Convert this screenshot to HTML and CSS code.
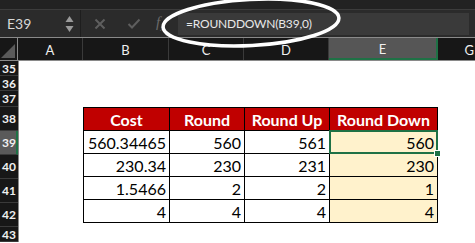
FILE: index.html
```html
<!DOCTYPE html>
<html lang="en">
<head>
    <meta charset="UTF-8">
    <title>ROUNDDOWN</title>
    <link rel="stylesheet" href="styles.css">
</head>
<body>
    <div class="app">
        <div class="topstrip"></div>

        <!-- Formula bar -->
        <div class="formula-bar">
            <div class="namebox">
                <span class="cell-ref">E39</span>
                <span class="spin">
                    <svg width="9" height="18" viewBox="0 0 9 18">
                        <path d="M4.5 1 L8.5 7 L0.5 7 Z" fill="#9a9a9a"/>
                        <path d="M4.5 17 L8.5 11 L0.5 11 Z" fill="#9a9a9a"/>
                    </svg>
                </span>
            </div>
            <span class="fb-btn">
                <svg width="12" height="12" viewBox="0 0 12 12">
                    <path d="M1.5 1.5 L10.5 10.5 M10.5 1.5 L1.5 10.5" stroke="#5e5e5e" stroke-width="2" fill="none"/>
                </svg>
            </span>
            <span class="fb-btn">
                <svg width="14" height="12" viewBox="0 0 14 12">
                    <path d="M1.5 6 L5 9.5 L12.5 1.5" stroke="#5e5e5e" stroke-width="2" fill="none"/>
                </svg>
            </span>
            <span class="fx">f<sub>x</sub></span>
            <div class="formula-input">=ROUNDDOWN(B39,0)</div>
            <!-- white annotation ellipse round the formula -->
            <svg class="callout" width="215" height="50" viewBox="0 0 215 50">
                <ellipse cx="111" cy="22.5" rx="88" ry="23" transform="rotate(-3 111 22.5)" fill="none" stroke="#fff" stroke-width="3.5"/>
            </svg>
        </div>

        <!-- Column headers -->
        <div class="col-headers">
            <div class="corner"><span class="corner-tri"></span></div>
            <div class="col-h">A</div>
            <div class="col-h">B</div>
            <div class="col-h">C</div>
            <div class="col-h">D</div>
            <div class="col-h active">E</div>
            <div class="col-h last">G</div>
        </div>

        <div class="sheet">
            <div class="row-headers">
                <div class="row-h short">35</div>
                <div class="row-h short">36</div>
                <div class="row-h short3">37</div>
                <div class="row-h">38</div>
                <div class="row-h active">39</div>
                <div class="row-h">40</div>
                <div class="row-h">41</div>
                <div class="row-h">42</div>
                <div class="row-h short">43</div>
            </div>
            <div class="cells">
                <table class="data">
                    <thead>
                        <tr>
                            <th class="w-cost">Cost</th>
                            <th class="w-round">Round</th>
                            <th class="w-up">Round Up</th>
                            <th class="w-down">Round Down</th>
                        </tr>
                    </thead>
                    <tbody>
                        <tr><td>560.34465</td><td>560</td><td>561</td><td class="down selected">560<span class="handle"></span></td></tr>
                        <tr><td>230.34</td><td>230</td><td>231</td><td class="down">230</td></tr>
                        <tr><td>1.5466</td><td>2</td><td>2</td><td class="down">1</td></tr>
                        <tr><td>4</td><td>4</td><td>4</td><td class="down">4</td></tr>
                    </tbody>
                </table>
            </div>
        </div>
    </div>
</body>
</html>
```

FILE: styles.css
```css
body {
    margin: 0;
    font-family: Lato, "Open Sans", Arial, sans-serif;
    background: #fff;
    overflow: hidden;
}

.app {
    width: 475px;
    height: 243px;
    overflow: hidden;
}

.topstrip {
    height: 9px;
    background: #222;
    border-bottom: 1px solid #3c3c3c;
}

/* Formula bar */
.formula-bar {
    position: relative;
    height: 27px;
    background: #2b2b2b;
    display: flex;
    align-items: center;
}

.namebox {
    width: 81px;
    height: 100%;
    border-right: 1px solid #1e1e1e;
    display: flex;
    align-items: center;
    justify-content: space-between;
    padding: 0 6px 0 7px;
    box-sizing: border-box;
}

.cell-ref {
    color: #d8d8d8;
    font-size: 14px;
}

.spin {
    display: flex;
}

.fb-btn {
    width: 31px;
    display: flex;
    justify-content: center;
    margin-left: 3px;
}

.fx {
    color: #6a6a6a;
    font-family: "Liberation Serif", serif;
    font-style: italic;
    font-size: 15px;
    margin-left: 7px;
    width: 18px;
}

.fx sub {
    font-size: 9px;
}

.formula-input {
    flex: 1;
    height: 22px;
    margin: 0 6px 0 4px;
    background: #3a3a3a;
    color: #e8e8e8;
    font-size: 12px;
    letter-spacing: -0.2px;
    line-height: 22px;
    padding-left: 8px;
}

.callout {
    position: absolute;
    left: 140px;
    top: -10px;
    z-index: 5;
}

/* Column headers */
.col-headers {
    display: grid;
    grid-template-columns: 18px 65px 86px 75px 85px 109px 1fr;
    height: 22px;
    background: #171717;
    border-top: 1px solid #8a8a8a;
    border-bottom: 1px solid #8a8a8a;
}

.corner {
    border-right: 1px solid #8a8a8a;
    position: relative;
}

.corner-tri {
    position: absolute;
    right: 2px;
    bottom: 2px;
    width: 0;
    height: 0;
    border-left: 14px solid transparent;
    border-bottom: 14px solid #5a5a5a;
}

.col-h {
    color: #f0f0f0;
    font-size: 13px;
    display: flex;
    align-items: center;
    justify-content: center;
    padding-top: 2px;
    border-right: 1px solid #3a3a3a;
}

.col-h.active {
    background: #565656;
    border-bottom: 2px solid #1e7145;
    border-right: 2px solid #1e7145;
}

.col-h.last {
    border-right: none;
    justify-content: flex-end;
    padding-right: 1px;
}

/* Sheet body */
.sheet {
    display: flex;
}

.row-headers {
    width: 18px;
    background: #171717;
    border-right: 1px solid #8a8a8a;
    flex-shrink: 0;
}

.row-h {
    height: 24px;
    box-sizing: border-box;
    border-bottom: 1px solid #3a3a3a;
    color: #f0f0f0;
    font-size: 12px;
    font-weight: bold;
    display: flex;
    align-items: center;
    padding-left: 2px;
}

.row-h.short {
    height: 15px;
}

.row-h.short3 {
    height: 16px;
}

.row-h.active {
    background: #5a5a5a;
    border-right: 2px solid #1e7145;
}

.cells {
    flex: 1;
    padding: 46px 0 0 64px;
}

.data {
    border-collapse: collapse;
    font-size: 16px;
    color: #000;
}

.data th,
.data td {
    border: 1px solid #000;
    height: 23px;
    padding: 0 3px;
    box-sizing: border-box;
}

.data th {
    background: #c00000;
    color: #fff;
    font-weight: bold;
    text-align: center;
}

.data td {
    text-align: right;
}

.w-cost { width: 86px; }
.w-round { width: 75px; }
.w-up { width: 85px; }
.w-down { width: 108px; }

.data td.down {
    background: #fff2cc;
}

.data td.selected {
    position: relative;
}

.data td.selected::after {
    content: "";
    position: absolute;
    left: -1px;
    top: -1px;
    right: -1px;
    bottom: -1px;
    border: 2px solid #1e7145;
}

.handle {
    position: absolute;
    right: -4px;
    bottom: -4px;
    width: 5px;
    height: 5px;
    background: #1e7145;
    border: 1px solid #fff;
    z-index: 2;
}
```
